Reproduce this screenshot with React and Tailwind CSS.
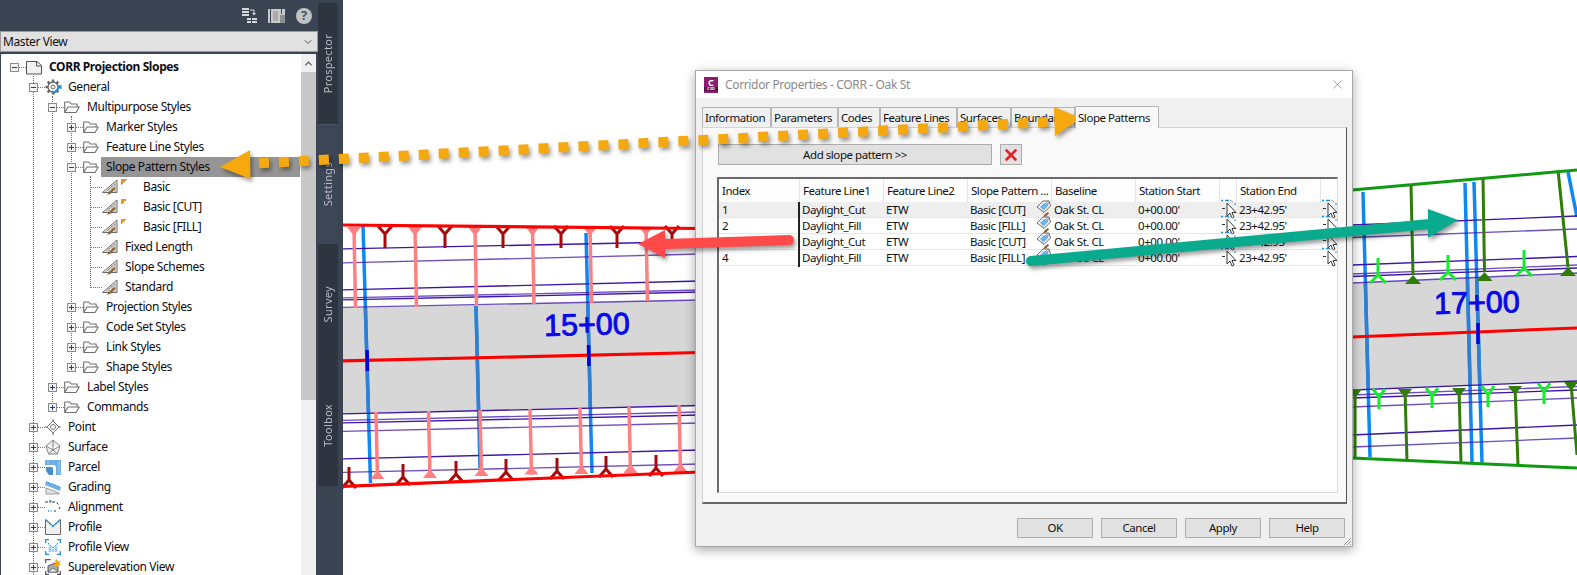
import React from "react";
import { X, ChevronDown, ChevronUp } from "lucide-react";

const font = "[font-family:'Noto_Sans',sans-serif]";

const treeRows = [
  { level: 0, name: "CORR Projection Slopes", exp: "-", icon: "page", bold: true },
  { level: 1, name: "General", exp: "-", icon: "gear" },
  { level: 2, name: "Multipurpose Styles", exp: "-", icon: "folder" },
  { level: 3, name: "Marker Styles", exp: "+", icon: "folder" },
  { level: 3, name: "Feature Line Styles", exp: "+", icon: "folder" },
  { level: 3, name: "Slope Pattern Styles", exp: "-", icon: "folder", selected: true },
  { level: 4, name: "Basic", icon: "style", tag: true },
  { level: 4, name: "Basic [CUT]", icon: "style", tag: true },
  { level: 4, name: "Basic [FILL]", icon: "style", tag: true },
  { level: 4, name: "Fixed Length", icon: "style" },
  { level: 4, name: "Slope Schemes", icon: "style" },
  { level: 4, name: "Standard", icon: "style" },
  { level: 3, name: "Projection Styles", exp: "+", icon: "folder" },
  { level: 3, name: "Code Set Styles", exp: "+", icon: "folder" },
  { level: 3, name: "Link Styles", exp: "+", icon: "folder" },
  { level: 3, name: "Shape Styles", exp: "+", icon: "folder" },
  { level: 2, name: "Label Styles", exp: "+", icon: "folder" },
  { level: 2, name: "Commands", exp: "+", icon: "folder" },
  { level: 1, name: "Point", exp: "+", icon: "point" },
  { level: 1, name: "Surface", exp: "+", icon: "surface" },
  { level: 1, name: "Parcel", exp: "+", icon: "parcel" },
  { level: 1, name: "Grading", exp: "+", icon: "grading" },
  { level: 1, name: "Alignment", exp: "+", icon: "alignment" },
  { level: 1, name: "Profile", exp: "+", icon: "profile" },
  { level: 1, name: "Profile View", exp: "+", icon: "profileview" },
  { level: 1, name: "Superelevation View", exp: "+", icon: "superelevation" },
];

const gearTeeth = [0, 45, 90, 135, 180, 225, 270, 315];

const shapes = {
  page: (
    <>
      <path d="M0.500 2.500h10.500l4.500 4v8.500h-15z" fill="#f0f0f0" stroke="#555" />
      <path d="M10.500 2.500v4.500h5" fill="none" stroke="#555" />
    </>
  ),
  gear: (
    <>
      {gearTeeth.map((a) => (
        <rect key={a} x="6.800" y="0.500" width="2.400" height="3" fill="#666" transform={`rotate(${a} 8 8)`} />
      ))}
      <circle cx="8" cy="8" r="5" fill="#fff" stroke="#666" strokeWidth="1.300" />
      <circle cx="8" cy="8" r="2" fill="#fff" stroke="#666" />
      <path d="M8 15l6-6" stroke="#1f8fe4" strokeWidth="2.200" fill="none" />
      <path d="M13 7h3v3" stroke="#1f8fe4" strokeWidth="1.300" fill="none" />
    </>
  ),
  folder: (
    <path d="M0.700 13.500V3h5l1.500 2h6v3M0.700 13.500L4 8h11.300l-3.300 5.500z" fill="#fff" stroke="#6f6f6f" strokeWidth="1.100" strokeLinejoin="round" />
  ),
  style: (
    <>
      <path d="M0.500 13.500L15 1v12.500z" fill="#ececec" stroke="#6a6a6a" />
      <path d="M4 12.500L13 5M7 13V9M10 13V6.500M13 13V4" stroke="#8a8a8a" strokeWidth="0.800" />
      <path d="M5 16l2-3 5-5 1.500 1.500-4.500 5z" fill="#946227" />
    </>
  ),
  point: (
    <>
      <path d="M8 0v16M0 8h16" stroke="#777" strokeWidth="1.200" />
      <path d="M8 2L14 8 8 14 2 8z" fill="#fff" stroke="#777" />
      <circle cx="8" cy="8" r="2.500" fill="#fff" stroke="#777" />
    </>
  ),
  surface: (
    <path d="M8 1l7 6-2.500 8h-9L1 7zM1 7l7 4 7-4M8 11l-4.500 4M8 11l4.500 4M8 1v10" fill="#eee" stroke="#7a7a7a" strokeWidth="0.900" />
  ),
  parcel: (
    <>
      <path d="M0 1h16v15h-5V9a3 3 0 0 0-3-3H0z" fill="#6fb0e6" />
      <path d="M1 8h6l1 1v7H4L1 12z" fill="#4b8fca" />
      <path d="M3 1v4M14 3v12" stroke="#a8d0f0" />
    </>
  ),
  grading: (
    <>
      <path d="M1 9l13 5v1H1z" fill="#e4e4e4" stroke="#777" strokeWidth="0.700" />
      <path d="M1 2l15 6-1 4L0 6z" fill="#6fb0e6" />
      <path d="M3 4l1-1M6 5.500l1-1M9 6.500l1-1M12 8l1-1" stroke="#3f82bd" />
    </>
  ),
  alignment: (
    <>
      <path d="M0 3h3M5 1v3M7 3h3M11.500 3.500l2 2M15 8l-1 2M11 12H9" fill="none" stroke="#333" />
      <path d="M5.500 12h1M3 12h1M5.500 2h1" stroke="#1f8fe4" strokeWidth="1.300" />
    </>
  ),
  profile: (
    <>
      <path d="M0.500 0.500V15.500H15.500V0.500L8 7z" fill="#f0f0f0" stroke="#666" />
      <path d="M1 1l7 6.500 7-6.500" fill="none" stroke="#1f8fe4" strokeDasharray="3 1" strokeWidth="1.400" />
    </>
  ),
  profileview: (
    <>
      <path d="M0.700 4V0.700h3.300M12 0.700h3.300V4M15.300 12v3.300H12M4 15.300H0.700V12" fill="none" stroke="#1f8fe4" strokeWidth="1.300" />
      <path d="M3 13V4l5 5 5-5v9z" fill="#d5e9f9" />
      <path d="M3 4l5 5 5-5" fill="none" stroke="#1f8fe4" strokeDasharray="2 1" />
      <path d="M5 13V8M8 13V10M11 13V8" stroke="#6fb0e6" />
    </>
  ),
  superelevation: (
    <>
      <path d="M0.700 4V0.700h5M0.700 12v3.300H4M12 15.300h3.300V12" fill="none" stroke="#555" strokeWidth="1.200" />
      <path d="M3 7l7-3 3 3v6H3z" fill="#a9a9a9" stroke="#555" />
      <path d="M3 13l5-4 5 4z" fill="#eee" stroke="#555" strokeWidth="0.700" />
      <path d="M12 0l1 2.500 2.800-.5-1.300 2.500 1.500 2-2.700 0-1.300 2.300-1-2.500-2.500-.5 2-1.500-.5-2.500z" fill="#f5a90f" />
    </>
  ),
};

const TreeIcon = ({ type }) => (
  <svg viewBox="0 0 16 16" className="w-4 h-4 block overflow-visible">
    {shapes[type]}
  </svg>
);

const Expander = ({ sign }) => (
  <span className="w-[9px] h-[9px] border border-[#8a8a8a] bg-[#f3f3f3] flex items-center justify-center relative shrink-0">
    <span className="w-[5px] h-px bg-[#1f3a8a]" />
    {sign === "+" && <span className="absolute w-px h-[5px] bg-[#1f3a8a]" />}
  </span>
);

const TreeRow = ({ row }) => {
  const left = row.exp ? 9 + row.level * 19 : 89;
  return (
    <div className="h-5 flex items-center relative" style={{ paddingLeft: left }}>
      {row.selected && <div className="absolute left-[100px] right-[1px] inset-y-0 bg-[#959595]" />}
      {row.exp && <Expander sign={row.exp} />}
      <span className={`${row.exp ? "w-[7px]" : "w-[12px]"} border-t border-dotted border-[#777] shrink-0`} />
      <span className="shrink-0 relative"><TreeIcon type={row.icon} /></span>
      {row.tag && (
        <span className="w-[22px] h-5 shrink-0 ml-[3px] pt-[2px]">
          <span className="block w-[6px] h-[6px] bg-[linear-gradient(135deg,#e8962a_50%,transparent_50%)]" />
        </span>
      )}
      <span className={`${row.tag ? "ml-0" : "ml-[7px]"} relative text-[12px] tracking-[-0.4px] whitespace-nowrap text-[#0c0c14] ${row.bold ? "font-bold" : ""}`}>
        {row.name}
      </span>
    </div>
  );
};

const SidePanel = () => (
  <div className="w-[318px] h-full flex flex-col bg-[#3b4453] shrink-0">
    <div className="h-[31px] flex items-center justify-end gap-[11px] pr-[6px] shrink-0">
      <svg viewBox="0 0 15 15" className="w-[15px] h-[15px]">
        <path d="M0 0h7v2H0zM0 3h7v2H0zM0 6h7v2H0zM5 10h4v2H5zM5 13h4v2H5zM10 10h5v2h-5zM10 13h5v2h-5z" fill="#d8d8d8" />
        <path d="M8 2h4v4" fill="none" stroke="#d8d8d8" />
        <path d="M10 5h4l-2 2.500z" fill="#d8d8d8" />
      </svg>
      <svg viewBox="0 0 17 14" className="w-[17px] h-[14px]">
        <path d="M0 0h2v14H0zM3 0h14v14H3z" fill="#c9c9c9" />
        <path d="M5 3h5M5 5h5M5 7h5M5 9h5M5 11h5" stroke="#8d8d8d" />
        <path d="M13 0h1v5h-1z" fill="#3b4453" />
        <path d="M12 6h5v8h-5z" fill="#8f8f8f" />
      </svg>
      <span className="w-4 h-4 rounded-full bg-[#c2c2c2] text-[#4c5260] text-[13px] font-bold flex items-center justify-center leading-none">?</span>
    </div>
    <div className="h-[21px] bg-[#e1e1e1] border border-[#9a9a9a] flex items-center justify-between pl-[2px] pr-[3px] shrink-0">
      <span className="text-[12px] tracking-[-0.4px] text-[#111]">Master View</span>
      <ChevronDown size={12} className="text-[#555]" />
    </div>
    <div className="h-[2px] shrink-0" />
    <div className="flex-1 ml-px mr-[2px] bg-white flex min-h-0 overflow-hidden">
      <div className="flex-1 pt-[3px] relative">
        <span className="absolute left-[32px] top-[22px] bottom-0 border-l border-dotted border-[#666]" />
        <span className="absolute left-[51px] top-[42px] h-[310px] border-l border-dotted border-[#666]" />
        <span className="absolute left-[70px] top-[62px] h-[250px] border-l border-dotted border-[#666]" />
        <span className="absolute left-[89px] top-[122px] h-[110px] border-l border-dotted border-[#666]" />
        {treeRows.map((row) => (
          <TreeRow key={row.name} row={row} />
        ))}
      </div>
      <div className="w-[15px] bg-[#f0f0f0] flex flex-col shrink-0">
        <div className="h-[18px] flex items-center justify-center">
          <ChevronUp size={11} strokeWidth={3} className="text-[#555]" />
        </div>
        <div className="h-[328px] bg-[#c8c8c8]" />
      </div>
    </div>
  </div>
);

const tabs = [
  { label: "Prospector", h: "h-[121px]", active: false },
  { label: "Settings", h: "h-[120px]", active: true },
  { label: "Survey", h: "h-[121px]", active: false },
  { label: "Toolbox", h: "h-[121px]", active: false },
];

const TabStrip = () => (
  <div className="w-[25px] h-full bg-[#3b4453] pt-[3px] flex flex-col shrink-0">
    {tabs.map((t) => (
      <div
        key={t.label}
        className={`${t.h} w-[20px] rounded-t-[3px] flex items-center justify-center ${t.active ? "bg-[#3d4656] border-t border-[#4b5464]" : "bg-[#2e3440]"}`}
      >
        <span className="[writing-mode:vertical-rl] rotate-180 text-[11px] tracking-[0.3px] text-[#b9bcc2] whitespace-nowrap">{t.label}</span>
      </div>
    ))}
  </div>
);

const PURPLE = "#3d14a8";
const PINK = "#ff8080";
const DARKRED = "#a50a0a";
const GREEN = "#2f7d08";
const LIME = "#14ee2a";
const BLUE = "#0f88f5";

const Seg = ({ a, b, c, w = 1.3, op = 1 }) => (
  <line x1={a[0]} y1={a[1]} x2={b[0]} y2={b[1]} stroke={c} strokeWidth={w} strokeOpacity={op} />
);

const leftPurple = [[249, 241.5], [263, 254], [290, 281], [298, 290], [300, 292], [307.5, 300], [414, 405.5], [420.5, 412], [423, 415], [431.500, 423], [459, 450], [472.5, 464]];
const rightPurple = [[225, 216], [237.5, 229], [265, 256.5], [274, 265], [276.5, 268], [283, 273], [390, 381], [395, 386.5], [398, 390], [407, 398], [435, 425], [447, 438]];

const Drawing = () => (
  <svg viewBox="343 0 1234 575" className="absolute inset-0 w-full h-full">
    <defs>
      <clipPath id="bandL"><path d="M341 308L700 300V405.500L341 414z" /></clipPath>
      <clipPath id="bandR"><path d="M1352 283L1577 273V381L1352 389z" /></clipPath>
    </defs>

    {/* left corridor */}
    <path d="M341 308L700 300V405.500L341 414z" fill="#d7d7d7" />
    {[[[363, 225], [370.5, 483]], [[476, 306], [480, 468]], [[586, 233], [592, 473]]].map(([a, b], i) => (
      <g key={i}>
        <Seg a={a} b={b} c={BLUE} w={3.500} />
        <g clipPath="url(#bandL)"><Seg a={a} b={b} c="#2f80d5" w={3.500} /></g>
      </g>
    ))}
    {leftPurple.map(([y1, y2], i) => (
      <Seg key={i} a={[341, y1]} b={[700, y2]} c={PURPLE} op={i % 2 ? 0.75 : 1} />
    ))}
    {[[354, 308], [415, 307], [475, 305], [532.5, 304], [590, 303], [646, 301]].map(([x, yb]) => (
      <g key={x}>
        <Seg a={[x, 228]} b={[x + 1.5, yb]} c={PINK} w={3.500} />
        <path d={`M${x - 7} 227h14l-7 9z`} fill={PINK} />
      </g>
    ))}
    {[385, 445, 503, 561, 617, 672].map((x) => (
      <path key={x} d={`M${x - 7} 226l7 8 7-8M${x} 234v14`} stroke={DARKRED} strokeWidth="3" fill="none" />
    ))}
    {[[376, 412, 479], [428.5, 411, 478], [480, 410, 476], [530, 409, 474.500], [580, 408, 474], [629, 406.500, 473], [679, 405, 472]].map(([x, yt, yb]) => (
      <g key={x}>
        <Seg a={[x, yt]} b={[x + 1.5, yb]} c={PINK} w={3.500} />
        <path d={`M${x - 5.500} ${yb}h14l-7 -9z`} fill={PINK} />
      </g>
    ))}
    {[[349, 467], [403, 464], [456, 461], [506, 459], [557, 458], [606, 456], [656, 455]].map(([x, yt]) => (
      <path key={x} d={`M${x} ${yt}v14M${x - 7} ${yt + 21}l7 -8 7 8`} stroke={DARKRED} strokeWidth="3" fill="none" />
    ))}
    <Seg a={[341, 225]} b={[700, 228.5]} c="#ff0000" w={3.200} />
    <Seg a={[341, 486.500]} b={[700, 472]} c="#ff0000" w={3.200} />
    <Seg a={[341, 361]} b={[700, 352.5]} c="#ff0000" w={3.200} />
    <Seg a={[367, 350]} b={[367.5, 371]} c="#0000e6" w={3.500} />
    <Seg a={[588.5, 345]} b={[589, 366]} c="#0000e6" w={3.500} />
    <text x="544" y="335" transform="rotate(-1.300 585 325)" fill="#0808e8" stroke="#0808e8" strokeWidth="0.900" fontSize="30.500" className="[font-family:'Liberation_Sans',sans-serif]">15+00</text>

    {/* right corridor */}
    <path d="M1352 283L1577 273V381L1352 389z" fill="#d7d7d7" />
    {[[[1363, 192], [1370, 457]], [[1465, 183], [1472, 462]], [[1474, 182], [1482, 463]], [[1568, 172], [1577, 217]]].map(([a, b], i) => (
      <g key={i}>
        <Seg a={a} b={b} c={BLUE} w={3.500} />
        <g clipPath="url(#bandR)"><Seg a={a} b={b} c="#2f80d5" w={3.500} /></g>
      </g>
    ))}
    {rightPurple.map(([y1, y2], i) => (
      <Seg key={i} a={[1352, y1]} b={[1577, y2]} c={PURPLE} op={i % 2 ? 0.75 : 1} />
    ))}
    {[[1411, 185, 1413, 275], [1483, 178, 1484.500, 272], [1558, 170, 1568, 267]].map(([x1, y1, x2, y2]) => (
      <g key={x1}>
        <Seg a={[x1, y1]} b={[x2, y2]} c={GREEN} w={3} />
        <path d={`M${x2 - 8} ${y2 + 9}h16l-8 -9z`} fill={GREEN} />
      </g>
    ))}
    {[[1355, 390, 1355, 458], [1405, 390, 1407, 461], [1459, 389, 1461, 463], [1515, 387, 1518, 465], [1571, 383, 1577, 455]].map(([x1, y1, x2, y2]) => (
      <g key={x1}>
        <Seg a={[x1, y1]} b={[x2, y2]} c={GREEN} w={3} />
        <path d={`M${x1 - 7} ${y1 - 1}h14l-7 9z`} fill={GREEN} />
      </g>
    ))}
    {[[1378, 258, 275], [1448, 255, 272], [1524, 250, 268]].map(([x, yt, yj]) => (
      <path key={x} d={`M${x} ${yt}v${yj - yt}M${x - 8} ${yj + 8}l8 -8 8 8`} stroke={LIME} strokeWidth="3" fill="none" />
    ))}
    {[[1379, 389, 397], [1432, 388, 396], [1488, 386, 395], [1544, 383, 392]].map(([x, yt, yj]) => (
      <path key={x} d={`M${x - 6} ${yt}l6 ${yj - yt} 6 ${yt - yj}M${x} ${yj}v12`} stroke={LIME} strokeWidth="3" fill="none" />
    ))}
    <Seg a={[1352, 190]} b={[1577, 170]} c="#119a11" w={3} />
    <Seg a={[1352, 458]} b={[1577, 468]} c="#119a11" w={3} />
    <Seg a={[1352, 337]} b={[1577, 328]} c="#ff0000" w={3} />
    <Seg a={[1478, 323]} b={[1478, 344]} c="#0000e6" w={3.500} />
    <text x="1434" y="313" transform="rotate(-1.300 1478 303)" fill="#0808e8" stroke="#0808e8" strokeWidth="0.900" fontSize="30.500" className="[font-family:'Liberation_Sans',sans-serif]">17+00</text>
  </svg>
);

const dialogTabs = [
  { label: "Information", w: "w-[69px]" },
  { label: "Parameters", w: "w-[67px]" },
  { label: "Codes", w: "w-[42px]" },
  { label: "Feature Lines", w: "w-[77px]" },
  { label: "Surfaces", w: "w-[54px]" },
  { label: "Boundaries", w: "w-[64px]" },
  { label: "Slope Patterns", w: "w-[84px]", active: true },
];

const columns = ["Index", "Feature Line1", "Feature Line2", "Slope Pattern ...", "Baseline", "Station Start", "", "Station End", ""];
const gridCols = "grid grid-cols-[81px_84px_84px_84px_84px_84px_17px_84px_17px]";

const patterns = [
  { index: 1, fl: "Daylight_Cut", style: "Basic [CUT]" },
  { index: 2, fl: "Daylight_Fill", style: "Basic [FILL]" },
  { index: 3, fl: "Daylight_Cut", style: "Basic [CUT]" },
  { index: 4, fl: "Daylight_Fill", style: "Basic [FILL]" },
];

const TagIcon = () => (
  <svg viewBox="0 0 16 18" className="w-[16px] h-[18px] shrink-0 -mt-[2px] overflow-visible">
    <path d="M1 7l6-6h6l1.500 5-6.500 6.500z" fill="#f2f2f2" stroke="#6a6a6a" />
    <path d="M4 7l4-4 4 .5 0 2.500-4.500 4.500z" fill="#6fb4ea" />
    <circle cx="11.500" cy="3" r="1" fill="#fff" stroke="#555" strokeWidth="0.500" />
    <path d="M7 17l2-3 3-2 1 1.500-3 3z" fill="#8d6432" />
  </svg>
);

const PickIcon = () => (
  <svg viewBox="0 0 17 20" className="w-[17px] h-[20px] -mt-[3px] overflow-visible">
    <path d="M1 1.500h2M5 1.500h4" stroke="#1e8fe6" strokeWidth="1.300" />
    <path d="M10 1l3 2" stroke="#999" />
    <path d="M14 5h2" stroke="#1e8fe6" />
    <path d="M2 9.500h3" stroke="#333" />
    <path d="M7 4v13l3-3 2 5 2-1-2-4.500h4z" fill="#fff" stroke="#222" strokeWidth="0.900" />
  </svg>
);

const cellText = "text-[11.5px] tracking-[-0.45px] text-[#111] whitespace-nowrap";

const PatternGrid = () => (
  <div className="mx-[14px] mr-[8px] flex-1 border-t-2 border-l-2 border-[#696969] border-r border-b border-r-[#dcdcdc] border-b-[#dcdcdc] bg-white overflow-hidden">
    <div className={`${gridCols} h-[23px] bg-[#fdfdfd]`}>
      {columns.map((c, i) => (
        <div key={i} className={`${cellText} border-r border-[#e4e4e4] pl-[3px] flex items-center`}>{c}</div>
      ))}
    </div>
    {patterns.map((p) => (
      <div key={p.index} className={`${gridCols} h-[16px] border-b border-[#e6e6e6] ${p.index === 1 ? "bg-[#eeeeee]" : ""}`}>
        <div className={`${cellText} pl-[3px] border-r-2 border-[#222] leading-[15px]`}>{p.index}</div>
        <div className={`${cellText} pl-[2px] leading-[15px]`}>{p.fl}</div>
        <div className={`${cellText} pl-[2px] leading-[15px]`}>ETW</div>
        <div className={`${cellText} pl-[2px] leading-[15px] flex justify-between`}>
          {p.style}
          <TagIcon />
        </div>
        <div className={`${cellText} pl-[2px] leading-[15px]`}>Oak St. CL</div>
        <div className={`${cellText} pl-[2px] leading-[15px]`}>0+00.00'</div>
        <div><PickIcon /></div>
        <div className={`${cellText} pl-[2px] leading-[15px]`}>23+42.95'</div>
        <div><PickIcon /></div>
      </div>
    ))}
  </div>
);

const Dialog = () => (
  <div className="absolute left-[352px] top-[70px] w-[658px] h-[477px] border border-[#a8a8a8] bg-[#f0f0f0] shadow-[0_3px_10px_rgba(0,0,0,0.35)] flex flex-col">
    <div className="h-[27px] bg-white flex items-center pl-[8px] pr-[7px] shrink-0">
      <div className="w-[14px] h-[16px] bg-[#8d1b6f] flex flex-col items-center justify-center text-white leading-none mr-[7px]">
        <span className="text-[9px] font-bold">C</span>
        <span className="text-[4px] font-bold bg-[#5c1048] w-full text-center">C3D</span>
      </div>
      <span className="text-[12px] tracking-[-0.35px] text-[#8a8a8a] flex-1">Corridor Properties - CORR - Oak St</span>
      <X size={15} strokeWidth={1} className="text-[#666]" />
    </div>
    <div className="flex pl-[6px] h-[29px] items-end shrink-0">
      {dialogTabs.map((t) => (
        <div
          key={t.label}
          className={`${t.w} border border-[#b5b5b5] border-b-0 pl-[2px] flex items-center ${cellText} overflow-hidden ${t.active ? "h-[22px] bg-[#f8f8f8] relative top-px z-10" : "h-[20px] bg-[#f0f0f0]"}`}
        >
          {t.label}
        </div>
      ))}
    </div>
    <div className="ml-[6px] mr-[5px] h-[377px] border border-[#d4d4d4] border-r-[#555] border-b-2 border-b-[#6a6a6a] bg-[#f9f9f9] flex flex-col shrink-0 pb-[9px]">
      <div className="flex gap-[8px] ml-[15px] mt-[16px] mb-[12px] shrink-0">
        <button className={`w-[274px] h-[21px] bg-[#e1e1e1] border border-[#adadad] ${cellText}`}>Add slope pattern &gt;&gt;</button>
        <button className="w-[22px] h-[21px] bg-[#e1e1e1] border border-[#adadad] flex items-center justify-center">
          <X size={18} strokeWidth={3.500} className="text-[#e0232b]" />
        </button>
      </div>
      <PatternGrid />
    </div>
    <div className="flex justify-end gap-[8px] pt-[14px] pr-[7px]">
      {["OK", "Cancel", "Apply", "Help"].map((b) => (
        <button key={b} className={`w-[76px] h-[20px] bg-[#e1e1e1] border border-[#adadad] ${cellText}`}>{b}</button>
      ))}
    </div>
    <svg viewBox="0 0 10 10" className="absolute right-0 bottom-0 w-[10px] h-[10px]">
      <path d="M9 2L2 9M9 5L5 9M9 8L8 9" stroke="#9a9a9a" />
    </svg>
  </div>
);

const Arrows = () => (
  <svg viewBox="0 0 1577 575" className="absolute inset-0 w-full h-full pointer-events-none drop-shadow-[2px_3px_2px_rgba(0,0,0,0.4)]">
    <line x1="239" y1="164.300" x2="1060" y2="121.300" stroke="#f5a90f" strokeWidth="10" strokeDasharray="10 10" />
    <path d="M220 167L250 150L250.500 179z" fill="#f5a90f" />
    <path d="M1081 118L1054 107L1055 136z" fill="#f5a90f" />
    <line x1="665" y1="244" x2="789" y2="240" stroke="#ff4a4a" strokeWidth="10" strokeLinecap="round" />
    <path d="M638 244L665 230V258z" fill="#ff4a4a" />
    <line x1="1031" y1="261" x2="1430" y2="224" stroke="#0aaa8e" strokeWidth="10" strokeLinecap="round" />
    <path d="M1458 220L1428 209V238z" fill="#0aaa8e" />
  </svg>
);

export default function App() {
  return (
    <div className={`relative w-[1577px] h-[575px] overflow-hidden flex bg-white ${font}`}>
      <SidePanel />
      <TabStrip />
      <div className="relative flex-1 bg-white">
        <Drawing />
        <Dialog />
      </div>
      <Arrows />
    </div>
  );
}
